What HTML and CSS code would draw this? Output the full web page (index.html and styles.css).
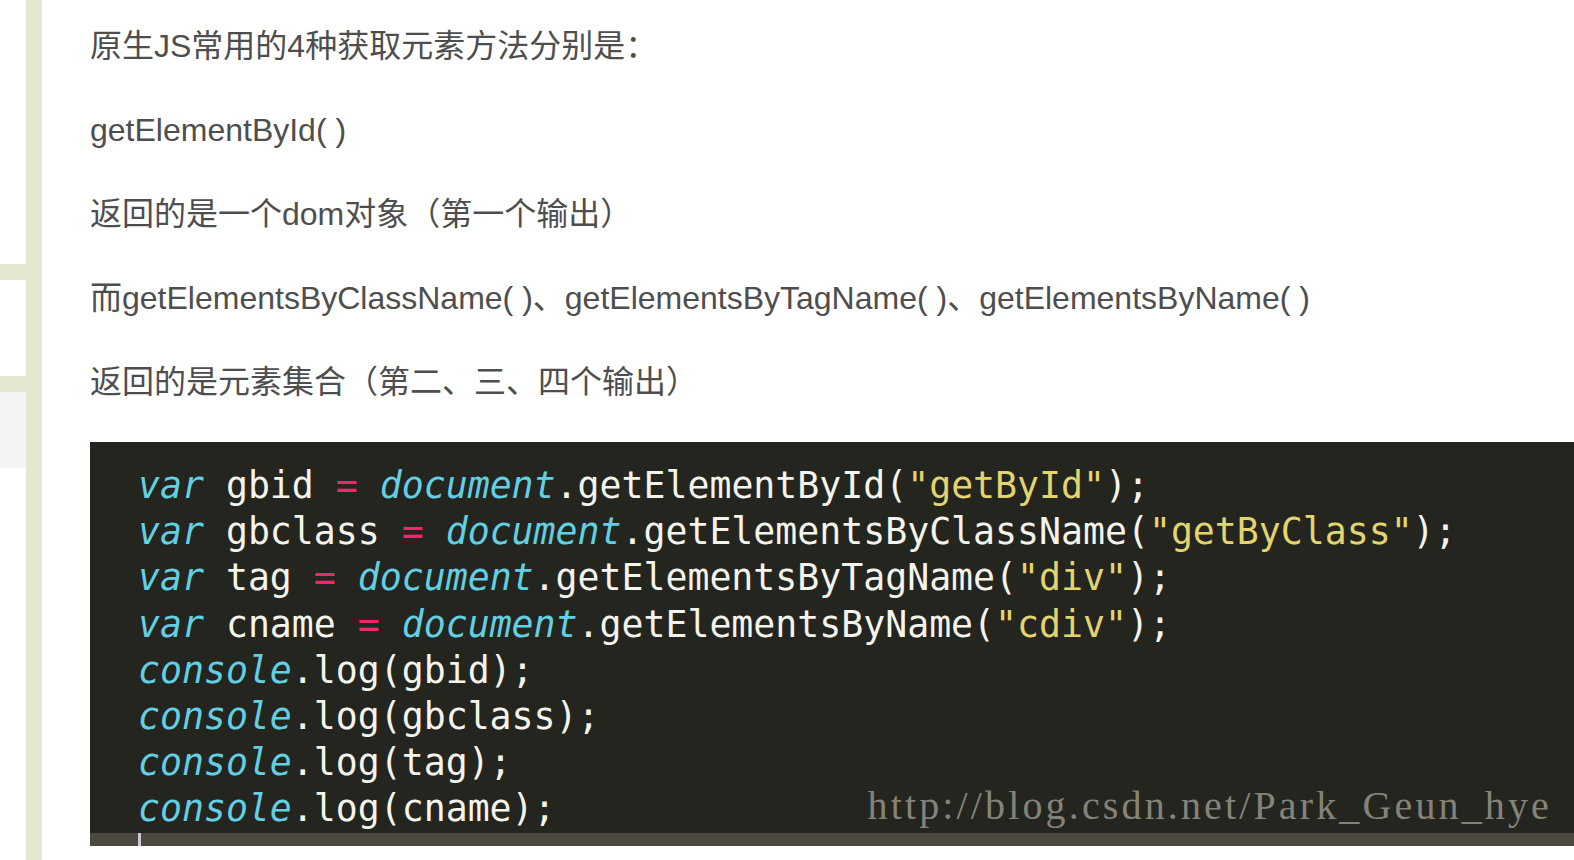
FILE: index.html
```html
<!DOCTYPE html>
<html lang="zh-CN">
<head>
<meta charset="utf-8">
<title>原生JS获取元素方法</title>
<link rel="stylesheet" href="styles.css">
</head>
<body>
<div class="page">
  <aside class="side">
    <div class="side-gap"></div>
    <div class="side-band"></div>
    <div class="side-white"></div>
    <div class="side-band"></div>
    <div class="side-gray"></div>
  </aside>
  <div class="rail"></div>
  <main class="content">
    <p class="para">原生JS常用的4种获取元素方法分别是：</p>
    <p class="para">getElementById( )</p>
    <p class="para">返回的是一个dom对象（第一个输出）</p>
    <p class="para">而getElementsByClassName( )、getElementsByTagName( )、getElementsByName( )</p>
    <p class="para">返回的是元素集合（第二、三、四个输出）</p>
    <div class="shot">
      <pre class="code"><span class="kw">var</span> gbid <span class="op">=</span> <span class="kw">document</span>.getElementById(<span class="str">"getById"</span>);
<span class="kw">var</span> gbclass <span class="op">=</span> <span class="kw">document</span>.getElementsByClassName(<span class="str">"getByClass"</span>);
<span class="kw">var</span> tag <span class="op">=</span> <span class="kw">document</span>.getElementsByTagName(<span class="str">"div"</span>);
<span class="kw">var</span> cname <span class="op">=</span> <span class="kw">document</span>.getElementsByName(<span class="str">"cdiv"</span>);
<span class="kw">console</span>.log(gbid);
<span class="kw">console</span>.log(gbclass);
<span class="kw">console</span>.log(tag);
<span class="kw">console</span>.log(cname);</pre>
      <div class="cur-line"><span class="caret"></span></div>
      <div class="watermark">http://blog.csdn.net/Park_Geun_hye</div>
    </div>
  </main>
</div>
</body>
</html>
```
FILE: styles.css
```css
html, body {
  margin: 0;
  padding: 0;
  background: #ffffff;
  overflow: hidden;
}

.page {
  display: flex;
  width: 1574px;
  height: 860px;
}

.side {
  width: 26px;
  flex: none;
  display: flex;
  flex-direction: column;
}

.side-gap { height: 264px; }
.side-band { height: 16px; background: #e4e6d2; }
.side-white { height: 96px; background: #ffffff; }
.side-gray { height: 76px; background: #f4f4f5; }

.rail {
  width: 16px;
  flex: none;
  background: #e5e7d3;
}

.content {
  flex: 1;
  min-width: 0;
  padding: 22px 0 0 48px;
}

.para {
  margin: 0 0 36px 0;
  font-family: "Liberation Sans", "Noto Sans CJK SC", sans-serif;
  font-size: 32px;
  line-height: 48px;
  color: #4e4e4e;
  white-space: nowrap;
}

.shot {
  position: relative;
  height: 404px;
  background: #24251f;
  display: flex;
  flex-direction: column;
  overflow: hidden;
}

.code {
  margin: 0;
  padding: 21px 0 0 48px;
  font-family: "DejaVu Sans Mono", monospace;
  font-size: 36.5px;
  line-height: 46.2px;
  color: #f4f4ee;
  white-space: pre;
}

.kw { color: #62cfe3; font-style: italic; }
.op { color: #f2266f; }
.str { color: #e2d56f; }

.cur-line {
  flex: 1;
  background: #4a483f;
  padding-left: 48px;
}

.caret {
  display: block;
  width: 3px;
  height: 100%;
  background: #c9c8cc;
}

.watermark {
  position: absolute;
  top: 344px;
  right: 22px;
  font-family: "Liberation Serif", serif;
  font-size: 40px;
  line-height: 40px;
  letter-spacing: 3.14px;
  color: #84837a;
  white-space: nowrap;
}
```
